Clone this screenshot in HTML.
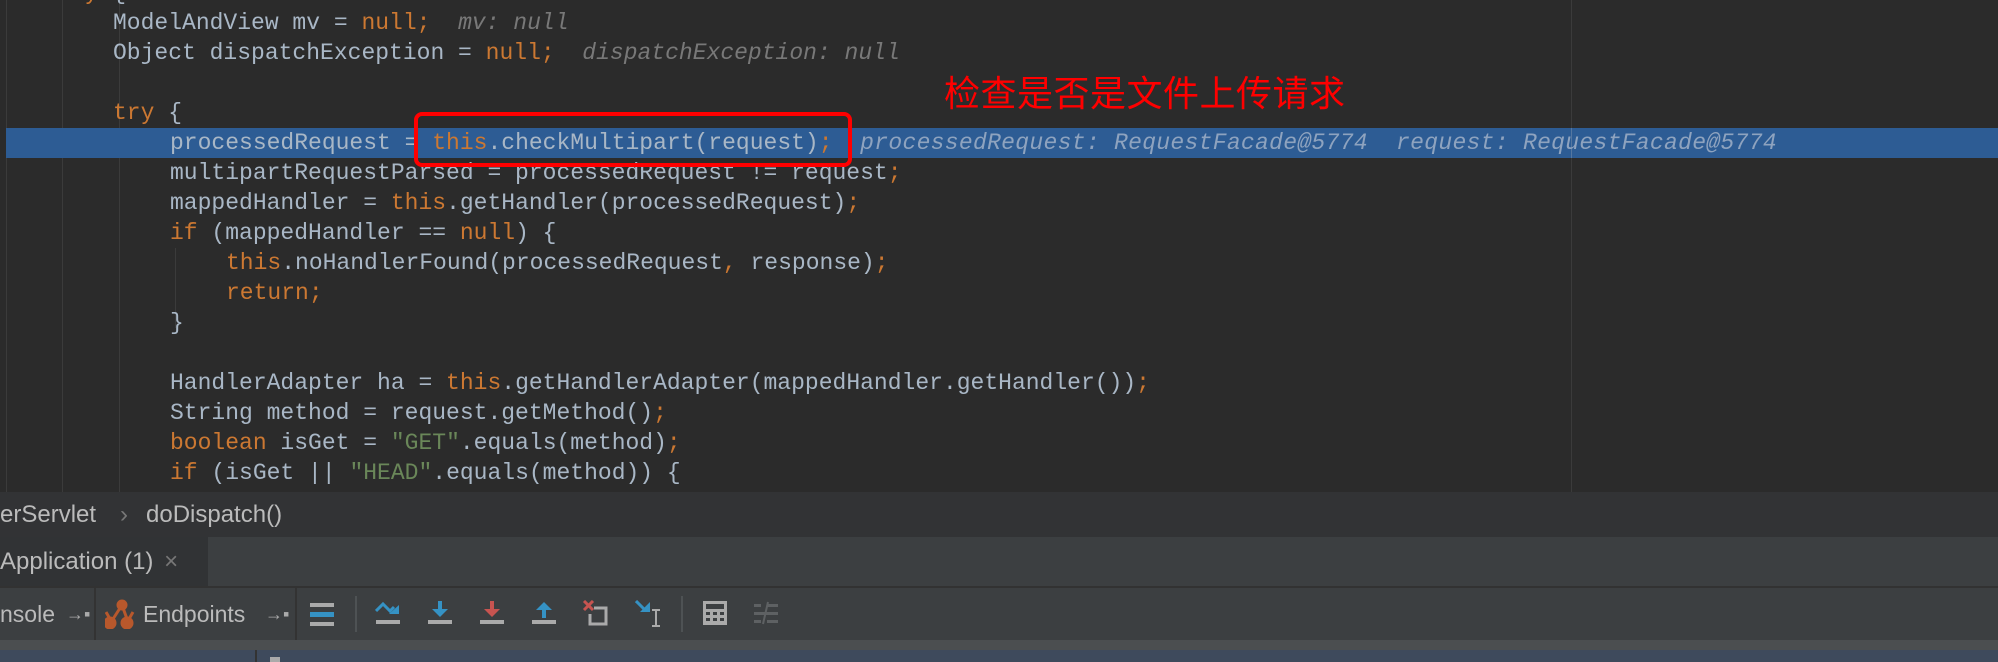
<!DOCTYPE html>
<html><head><meta charset="utf-8"><style>
*{margin:0;padding:0;box-sizing:border-box}
body{width:1998px;height:662px;overflow:hidden;background:#2b2b2b;position:relative;font-family:"Liberation Sans",sans-serif}
.ed{position:absolute;left:0;top:0;width:1998px;height:492px;background:#2b2b2b;overflow:hidden}
.l{position:absolute;white-space:pre;font-family:"Liberation Mono",monospace;font-size:23px;line-height:30px;height:30px;color:#a9b7c6}
.k{color:#cc7832}.s{color:#6a8759}.h{color:#787878;font-style:italic}
.g{position:absolute;top:0;width:1px;height:492px;background:#3b3b3b}
.ic{position:absolute;top:600px}
</style></head><body>
<div class="ed">
<div class="g" style="left:6px"></div>
<div class="g" style="left:62px"></div>
<div class="g" style="left:119px"></div>
<div class="g" style="left:175px;top:248px;height:80px"></div>
<div class="g" style="left:1571px"></div>
<div style="position:absolute;left:6px;top:128px;width:1992px;height:30px;background:#2d5c94"></div>
<div class="g" style="left:1571px;top:128px;height:30px;background:#5577a0"></div>
<div class="l" style="left:57px;top:-22px"><span class="k">try</span> {</div>
<div class="l" style="left:113px;top:8px">ModelAndView mv = <span class="k">null;</span>  <span class="h">mv: null</span></div>
<div class="l" style="left:113px;top:38px">Object dispatchException = <span class="k">null;</span>  <span class="h">dispatchException: null</span></div>
<div class="l" style="left:113px;top:98px"><span class="k">try</span> {</div>
<div class="l" style="left:170px;top:128px">processedRequest = <span class="k">this</span>.checkMultipart(request)<span class="k">;</span>  <span class="h" style="color:#8ea3bf;letter-spacing:0.3px">processedRequest: RequestFacade@5774  request: RequestFacade@5774</span></div>
<div class="l" style="left:170px;top:158px">multipartRequestParsed = processedRequest != request<span class="k">;</span></div>
<div class="l" style="left:170px;top:188px">mappedHandler = <span class="k">this</span>.getHandler(processedRequest)<span class="k">;</span></div>
<div class="l" style="left:170px;top:218px"><span class="k">if</span> (mappedHandler == <span class="k">null</span>) {</div>
<div class="l" style="left:226px;top:248px"><span class="k">this</span>.noHandlerFound(processedRequest<span class="k">,</span> response)<span class="k">;</span></div>
<div class="l" style="left:226px;top:278px"><span class="k">return;</span></div>
<div class="l" style="left:170px;top:308px">}</div>
<div class="l" style="left:170px;top:368px">HandlerAdapter ha = <span class="k">this</span>.getHandlerAdapter(mappedHandler.getHandler())<span class="k">;</span></div>
<div class="l" style="left:170px;top:398px">String method = request.getMethod()<span class="k">;</span></div>
<div class="l" style="left:170px;top:428px"><span class="k">boolean</span> isGet = <span class="s">"GET"</span>.equals(method)<span class="k">;</span></div>
<div class="l" style="left:170px;top:458px"><span class="k">if</span> (isGet || <span class="s">"HEAD"</span>.equals(method)) {</div>
<div style="position:absolute;left:414px;top:112px;width:438px;height:55px;border:4px solid #f00;border-radius:8px"></div>
<div style="position:absolute;left:944px;top:74px;font-family:'Liberation Sans','Noto Sans CJK SC',sans-serif;font-size:36px;line-height:40px;color:#f00;letter-spacing:0.5px">检查是否是文件上传请求</div>
</div>
<div style="position:absolute;left:0;top:492px;width:1998px;height:45px;background:#323335;color:#bbbbbb;font-size:24px;line-height:45px">
<span style="position:absolute;left:0">erServlet</span><span style="position:absolute;left:120px;color:#777">›</span><span style="position:absolute;left:146px">doDispatch()</span></div>
<div style="position:absolute;left:0;top:537px;width:1998px;height:49px;background:#3c3f41"></div>
<div style="position:absolute;left:0;top:537px;width:208px;height:49px;background:#313335;color:#bbbbbb;font-size:24px;line-height:49px;white-space:nowrap">Application (1) <span style="color:#777;margin-left:4px">×</span></div>
<div style="position:absolute;left:0;top:586px;width:1998px;height:2px;background:#323232"></div>
<div style="position:absolute;left:0;top:588px;width:1998px;height:52px;background:#3c3f41;color:#bbbbbb;font-size:23px;line-height:52px">
<span style="position:absolute;left:0">nsole</span>
<span style="position:absolute;left:66px;color:#aaa;font-size:18px">→▪</span>
<div style="position:absolute;left:94px;top:0;width:2px;height:52px;background:#333"></div>
<svg style="position:absolute;left:105px;top:11px" width="32" height="30" viewBox="0 0 32 30"><g fill="#b8582c" stroke="#b8582c" stroke-width="3"><circle cx="17" cy="6" r="4"/><circle cx="5" cy="24" r="5"/><circle cx="22" cy="24" r="5"/><line x1="17" y1="6" x2="8" y2="20" fill="none"/><line x1="17" y1="6" x2="22" y2="20"/><line x1="1" y1="13" x2="5" y2="20"/><line x1="28" y1="13" x2="24" y2="20"/></g></svg>
<span style="position:absolute;left:143px">Endpoints</span>
<span style="position:absolute;left:265px;color:#aaa;font-size:18px">→▪</span>
<div style="position:absolute;left:295px;top:0;width:2px;height:52px;background:#333"></div>
<div style="position:absolute;left:310px;top:15px;width:24px;height:4px;background:#aaa"></div>
<div style="position:absolute;left:310px;top:24px;width:24px;height:5px;background:#3592c4"></div>
<div style="position:absolute;left:310px;top:34px;width:24px;height:4px;background:#aaa"></div>
<div style="position:absolute;left:355px;top:8px;width:2px;height:36px;background:#4e5254"></div>
<div style="position:absolute;left:681px;top:8px;width:2px;height:36px;background:#4e5254"></div>
</div>
<svg class="ic" style="left:375px" width="26" height="26" viewBox="0 0 26 26"><path d="M1 11 L8 4 L15 11 L19 7" fill="none" stroke="#3592c4" stroke-width="3"/><path d="M14 14 L24 14 L24 5 Z" fill="#3592c4"/><rect x="1" y="20" width="24" height="4" fill="#aaa"/></svg>
<svg class="ic" style="left:427px" width="26" height="26" viewBox="0 0 26 26"><rect x="11" y="1" width="4" height="10" fill="#3592c4"/><path d="M5 9 L21 9 L13 17 Z" fill="#3592c4"/><rect x="1" y="20" width="24" height="4" fill="#aaa"/></svg>
<svg class="ic" style="left:479px" width="26" height="26" viewBox="0 0 26 26"><rect x="11" y="1" width="4" height="10" fill="#c75450"/><path d="M5 9 L21 9 L13 17 Z" fill="#c75450"/><rect x="1" y="20" width="24" height="4" fill="#aaa"/></svg>
<svg class="ic" style="left:531px" width="26" height="26" viewBox="0 0 26 26"><rect x="11" y="8" width="4" height="10" fill="#3592c4"/><path d="M5 10 L21 10 L13 2 Z" fill="#3592c4"/><rect x="1" y="20" width="24" height="4" fill="#aaa"/></svg>
<svg class="ic" style="left:582px" width="26" height="26" viewBox="0 0 26 26"><path d="M2 1 L11 10 M11 1 L2 10" stroke="#c75450" stroke-width="3"/><path d="M12 8 L24 8 L24 24 L8 24 L8 14" fill="none" stroke="#aaa" stroke-width="3"/></svg>
<svg class="ic" style="left:635px" width="30" height="28" viewBox="0 0 30 28"><path d="M1 1 L10 10" stroke="#3592c4" stroke-width="3"/><path d="M5 12 L15 12 L15 2 Z" fill="#3592c4"/><path d="M17 10 L25 10 M21 10 L21 26 M17 26 L25 26" stroke="#aaa" stroke-width="2"/></svg>
<svg class="ic" style="left:702px" width="26" height="26" viewBox="0 0 26 26"><rect x="1" y="1" width="24" height="24" fill="#aaa"/><rect x="4" y="4" width="18" height="5" fill="#3c3f41"/><g fill="#3c3f41"><rect x="4" y="12" width="4" height="3"/><rect x="11" y="12" width="4" height="3"/><rect x="18" y="12" width="4" height="3"/><rect x="4" y="18" width="4" height="3"/><rect x="11" y="18" width="4" height="3"/><rect x="18" y="18" width="4" height="3"/></g></svg>
<svg class="ic" style="left:753px" width="26" height="26" viewBox="0 0 26 26"><g fill="#5e6163"><rect x="1" y="4" width="7" height="3"/><rect x="14" y="4" width="11" height="3"/><rect x="1" y="12" width="24" height="3"/><rect x="1" y="20" width="7" height="3"/><rect x="14" y="20" width="11" height="3"/></g><path d="M15 2 L10 24" stroke="#5e6163" stroke-width="2"/></svg>
<div style="position:absolute;left:0;top:640px;width:1998px;height:10px;background:#4b4e50"></div>
<div style="position:absolute;left:0;top:650px;width:1998px;height:12px;background:#3e4a5c"></div>
<div style="position:absolute;left:255px;top:650px;width:2px;height:12px;background:#333"></div>
<div style="position:absolute;left:270px;top:657px;width:10px;height:5px;background:#aaa"></div>
</body></html>
